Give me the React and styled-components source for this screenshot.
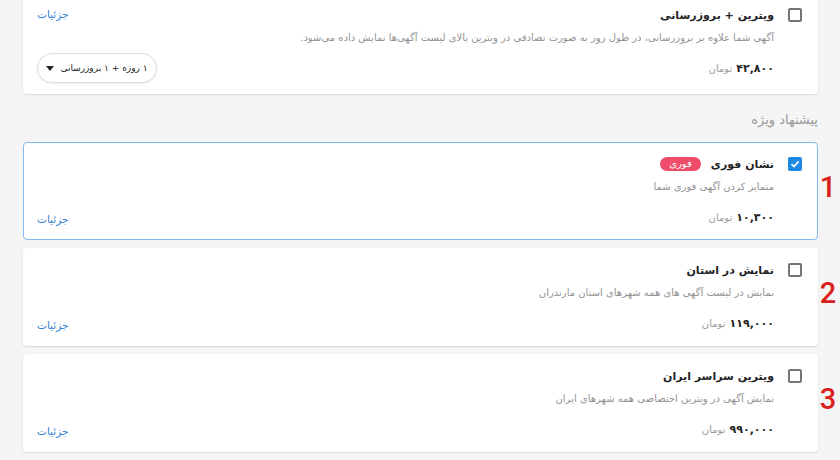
import React from 'react';
import styled, { createGlobalStyle } from 'styled-components';

const GlobalStyle = createGlobalStyle`
  html, body {
    margin: 0;
    padding: 0;
    background: #f5f5f5;
    font-family: "DejaVu Sans", "Noto Sans", sans-serif;
  }
`;

const Page = styled.div`
  direction: rtl;
  width: 840px;
  height: 460px;
  overflow: hidden;
  box-sizing: border-box;
  padding: 0 0 0 23px;
  display: grid;
  grid-template-columns: 22px 1fr;
  row-gap: 8px;
  align-content: start;
  margin-top: -7px;
`;

const Num = styled.div`
  font-family: Roboto, "Liberation Sans", Arial, sans-serif;
  color: #d9211c;
  font-size: 29px;
  font-weight: 500;
  display: flex;
  align-items: center;
  justify-content: center;
  padding: 0 2px 8px 0;
`;

const Card = styled.div`
  background: #fff;
  border-radius: 4px;
  border: 1px solid ${p => (p.$active ? '#85b8ec' : 'transparent')};
  box-shadow: ${p => (p.$active ? 'none' : '0 1px 2px rgba(0,0,0,0.12)')};
  display: flex;
  justify-content: space-between;
  padding: 13px 15px ${p => (p.$first ? '10px' : '13px')} 13px;
  min-height: 70px;
`;

const Main = styled.div`
  display: flex;
  gap: 14px;
  align-items: flex-start;
`;

const Box = styled.span`
  width: 14px;
  height: 14px;
  box-sizing: border-box;
  border-radius: 2px;
  border: 2px solid ${p => (p.$checked ? '#1e88e5' : '#757575')};
  background: ${p => (p.$checked ? '#1e88e5' : '#fff')};
  display: flex;
  align-items: center;
  justify-content: center;
  margin-top: 1px;
  flex-shrink: 0;
`;

const Texts = styled.div`
  display: flex;
  flex-direction: column;
  padding-bottom: ${p => (p.$first ? '8px' : '0')};
`;

const TitleRow = styled.div`
  display: flex;
  align-items: center;
  gap: 10px;
  height: 16px;
`;

const Title = styled.span`
  font-size: 11px;
  font-weight: bold;
  color: #222;
`;

const Badge = styled.span`
  background: #ee4c6a;
  color: #fff;
  font-size: 10px;
  border-radius: 9px;
  padding: 1px 9px 2px;
`;

const Desc = styled.div`
  font-size: 10px;
  color: #929292;
  margin-top: 9px;
`;

const Price = styled.div`
  margin-top: 19px;
  font-size: 11px;
  display: flex;
  gap: 4px;
  align-items: baseline;
`;

const Amount = styled.span`
  font-weight: bold;
  color: #222;
`;

const Unit = styled.span`
  color: #9a9a9a;
  font-size: 10px;
`;

const Side = styled.div`
  display: flex;
  flex-direction: column;
  justify-content: ${p => (p.$top ? 'space-between' : 'flex-end')};
  align-items: flex-end;
`;

const Link = styled.a`
  color: #2f7fd3;
  font-size: 10.5px;
  text-decoration: none;
  padding-bottom: ${p => (p.$bottom ? '1px' : '0')};
  margin-top: ${p => (p.$bottom ? '0' : '1px')};
`;

const Select = styled.button`
  direction: rtl;
  font-family: inherit;
  font-size: 9px;
  color: #222;
  background: #fff;
  border: 1px solid #ddd;
  border-radius: 15px;
  box-shadow: 0 1px 2px rgba(0,0,0,0.08);
  height: 30px;
  width: 120px;
  white-space: nowrap;
  display: flex;
  align-items: center;
  justify-content: center;
  gap: 6px;
  padding: 0 8px;
`;

const Caret = styled.span`
  width: 0;
  height: 0;
  border-left: 4px solid transparent;
  border-right: 4px solid transparent;
  border-top: 5px solid #222;
`;

const Section = styled.div`
  font-size: 13px;
  color: #9a9a9a;
  padding: 10px 0 7px;
`;

const Check = () => (
  <svg width="10" height="10" viewBox="0 0 10 10">
    <path d="M1.5 5.2 L4 7.6 L8.6 2.4" fill="none" stroke="#fff" strokeWidth="1.6" />
  </svg>
);

const offers = [
  { n: 1, title: 'نشان فوری', badge: 'فوری', desc: 'متمایز کردن آگهی فوری شما', price: '۱۰,۳۰۰', checked: true },
  { n: 2, title: 'نمایش در استان', desc: 'نمایش در لیست آگهی های همه شهرهای استان مازندران', price: '۱۱۹,۰۰۰' },
  { n: 3, title: 'ویترین سراسر ایران', desc: 'نمایش آگهی در ویترین اختصاصی همه شهرهای ایران', price: '۹۹۰,۰۰۰' },
];

const Offer = ({ item }) => (
  <>
    <Num>{item.n}</Num>
    <Card $active={item.checked}>
      <Main>
        <Box $checked={item.checked}>{item.checked && <Check />}</Box>
        <Texts>
          <TitleRow>
            <Title>{item.title}</Title>
            {item.badge && <Badge>{item.badge}</Badge>}
          </TitleRow>
          <Desc>{item.desc}</Desc>
          <Price>
            <Amount>{item.price}</Amount>
            <Unit>تومان</Unit>
          </Price>
        </Texts>
      </Main>
      <Side>
        <Link href="#" $bottom>جزئیات</Link>
      </Side>
    </Card>
  </>
);

export default function App() {
  return (
    <Page>
      <GlobalStyle />
      <span />
      <Card $first>
        <Main>
          <Box />
          <Texts $first>
            <TitleRow>
              <Title>ویترین + بروزرسانی</Title>
            </TitleRow>
            <Desc>آگهی شما علاوه بر بروزرسانی، در طول روز به صورت تصادفی در ویترین بالای لیست آگهی‌ها نمایش داده می‌شود.</Desc>
            <Price>
              <Amount>۴۲,۸۰۰</Amount>
              <Unit>تومان</Unit>
            </Price>
          </Texts>
        </Main>
        <Side $top>
          <Link href="#">جزئیات</Link>
          <Select>
            <span>۱ روزه + ۱ بروزرسانی</span>
            <Caret />
          </Select>
        </Side>
      </Card>
      <span />
      <Section>پیشنهاد ویژه</Section>
      {offers.map(o => (
        <Offer key={o.n} item={o} />
      ))}
    </Page>
  );
}
